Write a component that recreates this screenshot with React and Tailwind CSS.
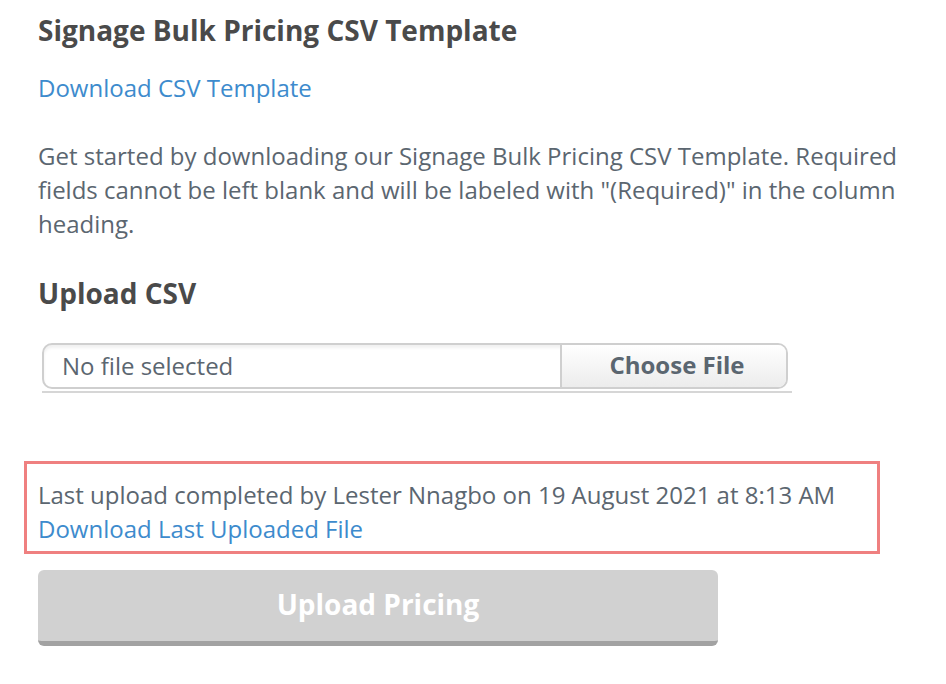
export default function App() {
    return (
        <div className="min-h-screen bg-white font-['Open_Sans',sans-serif]">
            <div className="pl-[38px] pr-[40px] pt-[12px] w-[940px]">
                <h2 className="text-[28px] leading-[36px] font-bold text-[#4a4a4a]">Signage Bulk Pricing CSV Template</h2>
                <a href="#" className="block mt-[25px] text-[24px] leading-[30px] text-[#3d8bcd]">Download CSV Template</a>
                <p className="mt-[36px] text-[24px] leading-[34px] text-[#5b6670]">
                    Get started by downloading our Signage Bulk Pricing CSV Template. Required fields cannot be left blank and will be labeled with "(Required)" in the column heading.
                </p>
                <h3 className="mt-[34px] text-[28px] leading-[36px] font-bold text-[#4a4a4a]">Upload CSV</h3>
                <div className="mt-[32px] ml-[4px] w-[750px] pb-[2px] border-b-2 border-[#d6d6d6]">
                    <div className="flex h-[46px] w-[746px] rounded-[10px] border-2 border-[#cfcfcf] overflow-hidden shadow-[inset_0_3px_3px_rgba(0,0,0,0.06)]">
                        <div className="flex-1 flex items-center pl-[18px] pb-[1px] text-[24px] text-[#5b6670]">No file selected</div>
                        <div className="w-[226px] flex items-center justify-center pl-[6px] pb-[2px] border-l-2 border-[#cfcfcf] bg-gradient-to-b from-[#ffffff] to-[#ececec] text-[24px] font-bold text-[#5b6670]">Choose File</div>
                    </div>
                </div>
            </div>
            <div className="ml-[24px] mt-[68px] w-[856px] h-[93px] border-[3px] border-[#ef8080] pl-[11px] pt-[14px]">
                <p className="text-[24px] leading-[34px] text-[#5b6670]">Last upload completed by Lester Nnagbo on 19 August 2021 at 8:13 AM</p>
                <a href="#" className="block text-[24px] leading-[34px] text-[#3d8bcd]">Download Last Uploaded File</a>
            </div>
            <div className="ml-[38px] mt-[16px] w-[680px]">
                <button disabled className="w-full h-[76px] pb-[3px] rounded-[6px] bg-[#d1d1d1] border-b-[5px] border-[#a2a2a2] text-[28px] font-bold text-white">
                    Upload Pricing
                </button>
            </div>
        </div>
    );
}
